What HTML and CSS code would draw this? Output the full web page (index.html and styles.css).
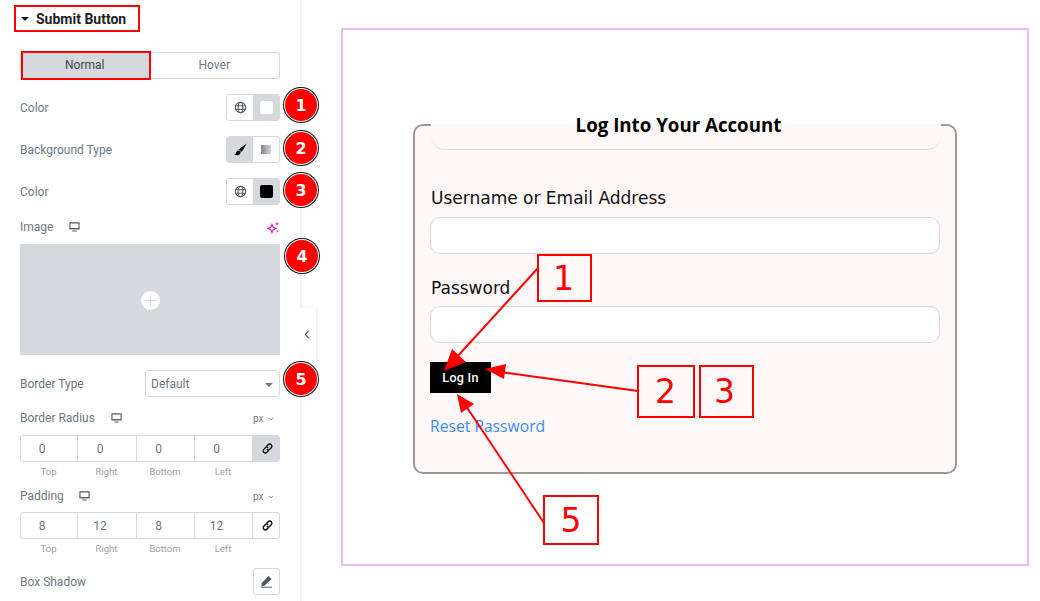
FILE: index.html
```html
<!DOCTYPE html>
<html>
<head>
  <title>Submit Button</title>
  <link rel="stylesheet" href="styles.css">
</head>
<body>
  <svg class="icon-defs" width="0" height="0">
    <symbol id="i-globe" viewBox="0 0 14 14">
      <g fill="none" stroke="#515962" stroke-width="1.1">
        <circle cx="7" cy="7" r="5.6"/>
        <ellipse cx="7" cy="7" rx="2.5" ry="5.6"/>
        <path d="M1.6 5h10.8M1.6 9h10.8"/>
      </g>
    </symbol>
    <symbol id="i-monitor" viewBox="0 0 12 11">
      <path fill="none" stroke="#515962" stroke-width="1.2" d="M1 1h10v6.4H1z"/>
      <path fill="#515962" d="M.6 7h10.8v1.1H.6zM3.6 9.4h4.8v1H3.6z"/>
    </symbol>
    <symbol id="i-link" viewBox="0 0 14 14">
      <g fill="none" stroke="#0c0d0e" stroke-width="1.5">
        <path d="M6 4.6l1.6-1.7a2.3 2.3 0 0 1 3.4 0 2.3 2.3 0 0 1 0 3.3L9.4 7.8a2.3 2.3 0 0 1-3.2 0"/>
        <path d="M8 9.4l-1.6 1.7a2.3 2.3 0 0 1-3.4 0 2.3 2.3 0 0 1 0-3.3l1.6-1.6a2.3 2.3 0 0 1 3.2 0"/>
      </g>
    </symbol>
    <symbol id="i-chevron" viewBox="0 0 8 5">
      <path fill="none" stroke="#6d7882" stroke-width="1" d="M1 1l3 2.6L7 1"/>
    </symbol>
  </svg>

  <div class="page">
    <aside class="sidebar">
      <div class="section-head">
        <span class="caret"></span>
        <span>Submit Button</span>
      </div>

      <div class="tabs">
        <div class="tab tab-active">Normal</div>
        <div class="tab">Hover</div>
      </div>

      <div class="row row-color">
        <label>Color</label>
        <div class="toggle">
          <span class="toggle-cell"><svg class="icon-globe"><use href="#i-globe"/></svg></span>
          <span class="toggle-cell is-on"><span class="swatch swatch-white"></span></span>
        </div>
        <span class="badge">1</span>
      </div>

      <div class="row row-bgtype">
        <label>Background Type</label>
        <div class="toggle">
          <span class="toggle-cell is-on">
            <svg class="icon-brush" viewBox="0 0 12 12"><path fill="#0c0d0e" d="M11.8.4L6 4.6 4.300 6.500c1.100.3 1.900 1.100 2.100 2.100L8.200 6.800zM3.800 7C2.500 7.200 2.300 8.200 2 9.100 1.800 9.800 1.200 10.200.2 10.300 1.800 11.600 4.100 11.700 5.200 10.600c.9-.9 1-1.800.7-2.400-.3-.6-1.200-1.200-2.100-1.200z"/></svg>
          </span>
          <span class="toggle-cell">
            <span class="gradient-icon"></span>
          </span>
        </div>
        <span class="badge badge-2">2</span>
      </div>

      <div class="row row-color2">
        <label>Color</label>
        <div class="toggle">
          <span class="toggle-cell"><svg class="icon-globe"><use href="#i-globe"/></svg></span>
          <span class="toggle-cell is-on"><span class="swatch swatch-black"></span></span>
        </div>
        <span class="badge badge-3">3</span>
      </div>

      <div class="row row-image">
        <label>Image</label>
        <svg class="icon-monitor"><use href="#i-monitor"/></svg>
        <svg class="icon-sparkle" viewBox="0 0 13 13">
          <path fill="none" stroke="#e614d2" stroke-width="1.1" d="M5 3.500l1.200 2.800L9 7.500 6.200 8.700 5 11.500 3.800 8.700 1 7.500l2.800-1.200z"/>
          <path fill="#e614d2" d="M10 .8l.6 1.400 1.400.6-1.400.6-.6 1.400-.6-1.400L8 2.800l1.400-.6zM10.500 9l.4 1 1 .4-1 .4-.4 1-.4-1-1-.4 1-.4z"/>
        </svg>
      </div>

      <div class="image-box">
        <span class="plus"></span>
        <span class="badge badge-4">4</span>
      </div>

      <div class="row row-border">
        <label>Border Type</label>
        <div class="select">Default<span class="select-caret"></span></div>
        <span class="badge badge-5">5</span>
      </div>

      <div class="row row-unit">
        <label>Border Radius</label>
        <svg class="icon-monitor"><use href="#i-monitor"/></svg>
        <span class="unit">px <svg class="icon-chevron"><use href="#i-chevron"/></svg></span>
      </div>
      <div class="dimensions">
        <span class="dim">0</span><span class="dim">0</span><span class="dim">0</span><span class="dim">0</span>
        <span class="dim-link is-on"><svg class="icon-link"><use href="#i-link"/></svg></span>
      </div>
      <div class="dim-labels">
        <span>Top</span><span>Right</span><span>Bottom</span><span>Left</span>
      </div>

      <div class="row row-unit row-unit2">
        <label>Padding</label>
        <svg class="icon-monitor"><use href="#i-monitor"/></svg>
        <span class="unit">px <svg class="icon-chevron"><use href="#i-chevron"/></svg></span>
      </div>
      <div class="dimensions">
        <span class="dim">8</span><span class="dim">12</span><span class="dim">8</span><span class="dim">12</span>
        <span class="dim-link"><svg class="icon-link"><use href="#i-link"/></svg></span>
      </div>
      <div class="dim-labels">
        <span>Top</span><span>Right</span><span>Bottom</span><span>Left</span>
      </div>

      <div class="row row-shadow">
        <label>Box Shadow</label>
        <span class="edit-btn">
          <svg class="icon-pencil" viewBox="0 0 14 14"><path fill="#515962" d="M9.400 1.200l3 3-7.600 7.500-3.300.3.300-3.300zM1 12.600h12v1H1z"/></svg>
        </span>
      </div>

      <div class="collapse-tab">
        <svg viewBox="0 0 6 10"><path fill="none" stroke="#515962" stroke-width="1.300" d="M4.800 1L1.200 5l3.600 4"/></svg>
      </div>
    </aside>

    <main class="canvas">
      <div class="frame">
        <div class="card">
          <div class="card-title">
            <h2>Log Into Your Account</h2>
          </div>
          <div class="field field-user">
            <label>Username or Email Address</label>
            <div class="input"></div>
          </div>
          <div class="field field-pass">
            <label>Password</label>
            <div class="input"></div>
          </div>
          <button class="login">Log In</button>
          <a class="reset">Reset Password</a>
        </div>
      </div>
    </main>
  </div>

  <!-- annotations drawn on top of the screenshot -->
  <div class="mark-tabs"></div>
  <div class="mark-head"></div>
  <svg class="arrows" width="1040" height="601" viewBox="0 0 1040 601">
    <g stroke="#ff0000" stroke-width="2" fill="#ff0000">
      <path d="M538 268L456 358"/>
      <path d="M444 371L452 349 466 362z" stroke="none"/>
      <path d="M638 391L500 372"/>
      <path d="M485 369L506 364 504 379z" stroke="none"/>
      <path d="M544 523L466 406"/>
      <path d="M457 394L474 404 461 413z" stroke="none"/>
    </g>
  </svg>
  <div class="num num-1">1</div>
  <div class="num num-2">2</div>
  <div class="num num-3">3</div>
  <div class="num num-5">5</div>
</body>
</html>
```

FILE: styles.css
```css
html, body {
  margin: 0;
  padding: 0;
}
body {
  width: 1040px;
  height: 601px;
  overflow: hidden;
  position: relative;
  background: #fff;
  font-family: Roboto, "Liberation Sans", sans-serif;
  color: #6d7882;
}
.icon-defs {
  position: absolute;
}
.page {
  display: flex;
  height: 601px;
}

/* left panel */
.sidebar {
  width: 260px;
  height: 601px;
  flex: none;
  box-sizing: content-box;
  padding: 0 20px;
  border-right: 2px solid #f3f3f3;
  position: relative;
  font-size: 12px;
}
.section-head {
  display: flex;
  align-items: center;
  height: 38px;
  padding-left: 1px;
  font-size: 14px;
  font-weight: 700;
  color: #1f2124;
}
.caret {
  width: 0;
  height: 0;
  border-left: 4px solid transparent;
  border-right: 4px solid transparent;
  border-top: 4px solid #0c0d0e;
  margin-right: 7px;
}
.tabs {
  display: flex;
  height: 27px;
  margin-top: 14px;
}
.tab {
  flex: 1;
  display: flex;
  align-items: center;
  justify-content: center;
  padding-bottom: 2px;
  box-sizing: border-box;
  border: 1px solid #d5d8dc;
  border-left: none;
  border-radius: 0 3px 3px 0;
  color: #6d7882;
}
.tab-active {
  background: #d5d8dc;
  color: #3f444b;
  border: none;
  border-radius: 3px 0 0 3px;
}
.row {
  display: flex;
  align-items: center;
  justify-content: space-between;
  position: relative;
}
.row-color {
  height: 27px;
  margin-top: 15px;
}
.row-bgtype {
  height: 27px;
  margin-top: 15px;
}
.row-color2 {
  height: 27px;
  margin-top: 15px;
}
.toggle {
  display: flex;
  width: 54px;
  height: 27px;
  box-sizing: border-box;
  border: 1px solid #d5d8dc;
  border-radius: 3px;
  overflow: hidden;
}
.toggle-cell {
  flex: 1;
  display: flex;
  align-items: center;
  justify-content: center;
}
.toggle-cell.is-on {
  background: #d5d8dc;
}
.icon-globe {
  width: 13px;
  height: 13px;
}
.swatch {
  width: 13px;
  height: 13px;
  border-radius: 2px;
}
.swatch-white {
  background: #fff;
}
.swatch-black {
  background: #000;
}
.icon-brush {
  width: 13px;
  height: 13px;
}
.gradient-icon {
  width: 10px;
  height: 9px;
  background: linear-gradient(90deg, #7f858d, #d5d8dc);
}
.badge {
  position: absolute;
  left: 265px;
  top: -5px;
  width: 32px;
  height: 32px;
  box-sizing: border-box;
  border-radius: 50%;
  background: #fe0000;
  box-shadow: 0 0 0 1px #fff, 0 0 0 2px #111;
  display: flex;
  align-items: center;
  justify-content: center;
  color: #fff;
  font-family: "DejaVu Sans", sans-serif;
  font-weight: 700;
  font-size: 16px;
}
.badge-2 {
  top: -4px;
}
.badge-3 {
  top: -4px;
}
.badge-4 {
  top: -4px;
  left: 266px;
}
.badge-5 {
  top: -7px;
}
.row-image {
  justify-content: flex-start;
  height: 16px;
  margin-top: 14px;
}
.row-image .icon-monitor {
  margin-left: 16px;
}
.icon-monitor {
  width: 11px;
  height: 10px;
}
.icon-sparkle {
  width: 13px;
  height: 13px;
  margin-left: auto;
}
.image-box {
  height: 111px;
  box-sizing: border-box;
  padding-top: 2px;
  margin-top: 9px;
  background: #d5d8dc;
  position: relative;
  display: flex;
  align-items: center;
  justify-content: center;
}
.plus {
  width: 19px;
  height: 19px;
  border-radius: 50%;
  background: #fff;
  position: relative;
}
.plus::before, .plus::after {
  content: "";
  position: absolute;
  background: #d5d8dc;
}
.plus::before {
  left: 9px;
  top: 4px;
  width: 1px;
  height: 11px;
}
.plus::after {
  left: 4px;
  top: 9px;
  width: 11px;
  height: 1px;
}
.row-border {
  height: 27px;
  margin-top: 15px;
}
.select {
  width: 135px;
  height: 27px;
  box-sizing: border-box;
  border: 1px solid #d5d8dc;
  border-radius: 3px;
  padding-left: 5px;
  display: flex;
  align-items: center;
  position: relative;
}
.select-caret {
  position: absolute;
  right: 6px;
  top: 12px;
  border-left: 4px solid transparent;
  border-right: 4px solid transparent;
  border-top: 4px solid #6d7882;
}
.row-unit {
  justify-content: flex-start;
  height: 16px;
  margin-top: 13px;
}
.row-unit .icon-monitor {
  margin-left: 16px;
}
.row-unit2 {
  margin-top: 10px;
}
.row-unit2 + .dimensions {
  margin-top: 8px;
}
.row-unit2 .icon-monitor {
  margin-left: 15px;
}
.unit {
  margin-left: auto;
  margin-right: 6px;
  font-size: 10px;
  color: #6d7882;
}
.icon-chevron {
  width: 6px;
  height: 4px;
  margin-left: 2px;
  vertical-align: 1px;
}
.dimensions {
  display: grid;
  grid-template-columns: 57px 59px 58px 58px 28px;
  height: 27px;
  box-sizing: border-box;
  margin-top: 9px;
  border: 1px solid #d5d8dc;
  border-radius: 3px;
  overflow: hidden;
}
.dim, .dim-link {
  display: flex;
  align-items: center;
  justify-content: center;
  border-right: 1px solid #d5d8dc;
  padding-right: 14px;
  font-size: 12px;
}
.dim-link {
  border-right: none;
  padding-right: 0;
}
.dim-link.is-on {
  background: #d5d8dc;
}
.icon-link {
  width: 13px;
  height: 13px;
}
.dim-labels {
  display: grid;
  grid-template-columns: 57px 59px 58px 58px;
  margin-top: 4px;
  height: 12px;
  line-height: 12px;
  font-size: 9.5px;
  color: #9aa1a8;
  text-align: center;
}
.row-shadow {
  height: 27px;
  margin-top: 13px;
}
.edit-btn {
  width: 27px;
  height: 27px;
  box-sizing: border-box;
  border: 1px solid #d5d8dc;
  border-radius: 3px;
  display: flex;
  align-items: center;
  justify-content: center;
}
.icon-pencil {
  width: 13px;
  height: 13px;
}
.collapse-tab {
  position: absolute;
  left: 300px;
  top: 308px;
  width: 16px;
  height: 52px;
  box-sizing: border-box;
  padding-right: 3px;
  background: #fff;
  box-shadow: 1px 0 2px rgba(0,0,0,.1);
  display: flex;
  align-items: center;
  justify-content: center;
}
.collapse-tab svg {
  width: 6px;
  height: 9px;
}

/* preview area */
.canvas {
  flex: 1;
  padding: 28px 11px 35px 39px;
  box-sizing: border-box;
  height: 601px;
}
.frame {
  height: 100%;
  box-sizing: border-box;
  border: 2px solid #efb8f8;
  padding-top: 94px;
  display: flex;
  justify-content: center;
  align-items: flex-start;
}
.card {
  width: 544px;
  height: 350px;
  box-sizing: border-box;
  border: 2px solid #a69595;
  border-radius: 10px;
  background: #fef8f8;
  padding: 0 15px;
  display: flex;
  flex-direction: column;
  align-items: flex-start;
  font-family: "DejaVu Sans", sans-serif;
  color: #111;
}
.card-title {
  align-self: stretch;
  box-sizing: border-box;
  height: 26px;
  margin: -2px -1px 0 1px;
  background: #fef8f8;
  border-bottom: 1px solid #e2dcdc;
  border-radius: 0 0 14px 14px;
}
.card-title h2 {
  margin: -11px 0 0 0;
  padding-right: 15px;
  font-family: "Open Sans", sans-serif;
  font-size: 18.700px;
  line-height: 24px;
  font-weight: 700;
  color: #000;
  text-align: center;
}
.field {
  align-self: stretch;
}
.field label {
  display: block;
  margin-left: 1px;
  font-size: 17px;
  line-height: 22px;
  color: #111;
}
.field-user {
  margin-top: 37px;
}
.field-pass {
  margin-top: 23px;
}
.input {
  height: 37px;
  box-sizing: border-box;
  margin-top: 8px;
  background: #fff;
  border: 1px solid #dcd8d8;
  border-radius: 10px;
}
.field-pass .input {
  margin-top: 7px;
}
.login {
  margin-top: 19px;
  width: 61px;
  height: 31px;
  background: #000;
  border: none;
  padding: 0;
  color: #fff;
  font-family: Roboto, sans-serif;
  font-weight: 500;
  font-size: 12.500px;
  letter-spacing: .3px;
}
.reset {
  margin-top: 22px;
  font-family: "Open Sans", sans-serif;
  font-size: 15.700px;
  line-height: 22px;
  color: #3d8bf2;
}

/* red annotation boxes */
.mark-head, .mark-tabs {
  position: absolute;
  box-sizing: border-box;
  border: 2px solid #fe0000;
}
.mark-head {
  left: 14px;
  top: 5px;
  width: 126px;
  height: 27px;
}
.mark-tabs {
  left: 21px;
  top: 51px;
  width: 130px;
  height: 29px;
}
.arrows {
  position: absolute;
  left: 0;
  top: 0;
}
.num {
  position: absolute;
  box-sizing: border-box;
  border: 2px solid #fe0000;
  background: transparent;
  color: #fe0000;
  font-family: "DejaVu Sans", sans-serif;
  font-size: 33px;
  display: flex;
  align-items: center;
  justify-content: center;
}
.num-1 {
  left: 537px;
  top: 254px;
  width: 55px;
  height: 48px;
  padding-right: 2px;
}
.num-2 {
  left: 637px;
  top: 365px;
  width: 58px;
  height: 53px;
  padding-right: 1px;
}
.num-3 {
  left: 699px;
  top: 365px;
  width: 55px;
  height: 53px;
  padding-right: 4px;
}
.num-5 {
  left: 543px;
  top: 495px;
  width: 56px;
  height: 50px;
  background: #fff;
}
```
